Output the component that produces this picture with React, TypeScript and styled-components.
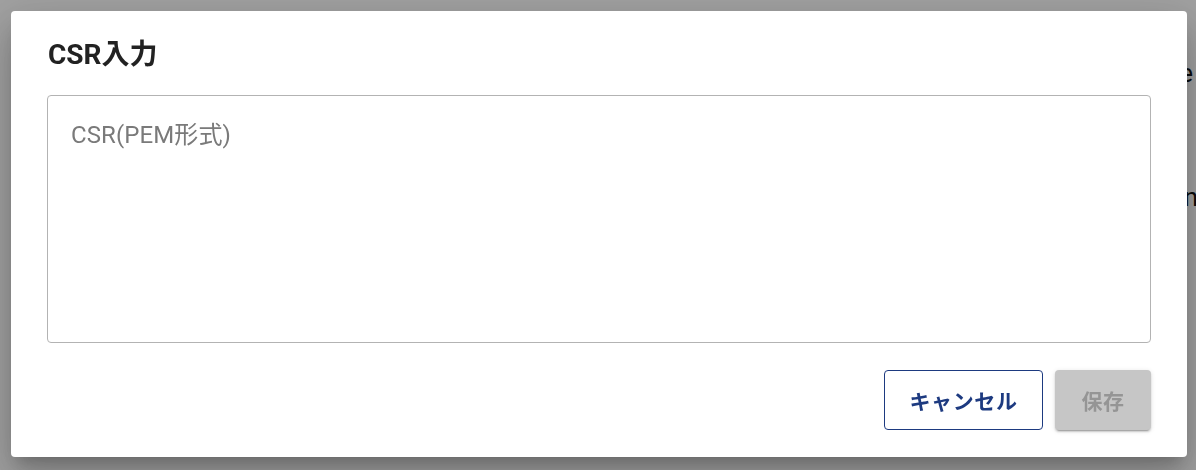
import React from 'react';
import styled, { createGlobalStyle } from 'styled-components';

const GlobalStyle = createGlobalStyle`
  html, body {
    margin: 0;
    padding: 0;
    width: 100%;
    height: 100%;
    overflow: hidden;
    background: #fff;
    font-family: Roboto, "Noto Sans CJK JP", sans-serif;
  }
`;

const Page = styled.div`
  height: 470px;
  display: flex;
  flex-direction: column;
  align-items: flex-end;
  padding-top: 57px;
  box-sizing: border-box;
`;

const PageRow = styled.div<{ $gap: number; $shift: number }>`
  font-size: 26px;
  line-height: 32px;
  color: #111;
  margin-bottom: ${p => p.$gap}px;
  margin-right: ${p => p.$shift}px;
  white-space: nowrap;
`;

const Backdrop = styled.div`
  position: fixed;
  inset: 0;
  background: rgba(0, 0, 0, 0.37);
  display: flex;
  align-items: flex-start;
  justify-content: flex-start;
  padding: 11px 9px 13px 11px;
  box-sizing: border-box;
`;

const Dialog = styled.div`
  flex: 1;
  height: 446px;
  background: #fff;
  border-radius: 4px;
  box-shadow: 0 11px 15px -7px rgba(0, 0, 0, 0.2), 0 24px 38px 3px rgba(0, 0, 0, 0.14),
    0 9px 46px 8px rgba(0, 0, 0, 0.12);
  display: flex;
  flex-direction: column;
  padding: 30px 36px 27px 36px;
  box-sizing: border-box;
`;

const Title = styled.h2`
  margin: 0 0 0 1px;
  font-size: 28px;
  font-weight: 700;
  line-height: 28px;
  color: #222;
`;

const Field = styled.textarea`
  margin-top: 26px;
  height: 248px;
  border: 1px solid #b3b3b3;
  border-radius: 4px;
  padding: 24px 23px;
  box-sizing: border-box;
  resize: none;
  outline: none;
  font-family: Roboto, "Noto Sans CJK JP", sans-serif;
  font-size: 24px;
  letter-spacing: 0.1px;
  line-height: 30px;
  color: #222;

  &::placeholder {
    color: #7a7a7a;
    opacity: 1;
  }
`;

const Actions = styled.div`
  margin-top: 27px;
  display: flex;
  justify-content: flex-end;
  gap: 12px;
`;

const Button = styled.button<{ $variant: 'outline' | 'disabled' }>`
  height: 60px;
  padding: 0;
  border-radius: 4px;
  font-family: Roboto, "Noto Sans CJK JP", sans-serif;
  font-size: 21px;
  font-weight: 700;
  letter-spacing: 0.6px;
  box-sizing: border-box;
  cursor: pointer;
  width: ${p => (p.$variant === 'outline' ? '159px' : '96px')};
  background: ${p => (p.$variant === 'outline' ? '#fff' : '#c6c6c6')};
  color: ${p => (p.$variant === 'outline' ? '#1d3a80' : '#959595')};
  border: ${p => (p.$variant === 'outline' ? '1px solid #1d3a80' : 'none')};
  box-shadow: ${p =>
    p.$variant === 'outline'
      ? 'none'
      : '0 3px 1px -2px rgba(0,0,0,0.2), 0 2px 2px 0 rgba(0,0,0,0.14), 0 1px 5px 0 rgba(0,0,0,0.12)'};
`;

export default function App() {
  return (
    <>
      <GlobalStyle />
      <Page>
        <PageRow $gap={92} $shift={3}>Name</PageRow>
        <PageRow $gap={0} $shift={-2}>Domain</PageRow>
      </Page>
      <Backdrop>
        <Dialog>
          <Title>CSR入力</Title>
          <Field placeholder="CSR(PEM形式)" />
          <Actions>
            <Button $variant="outline">キャンセル</Button>
            <Button $variant="disabled" disabled>保存</Button>
          </Actions>
        </Dialog>
      </Backdrop>
    </>
  );
}
